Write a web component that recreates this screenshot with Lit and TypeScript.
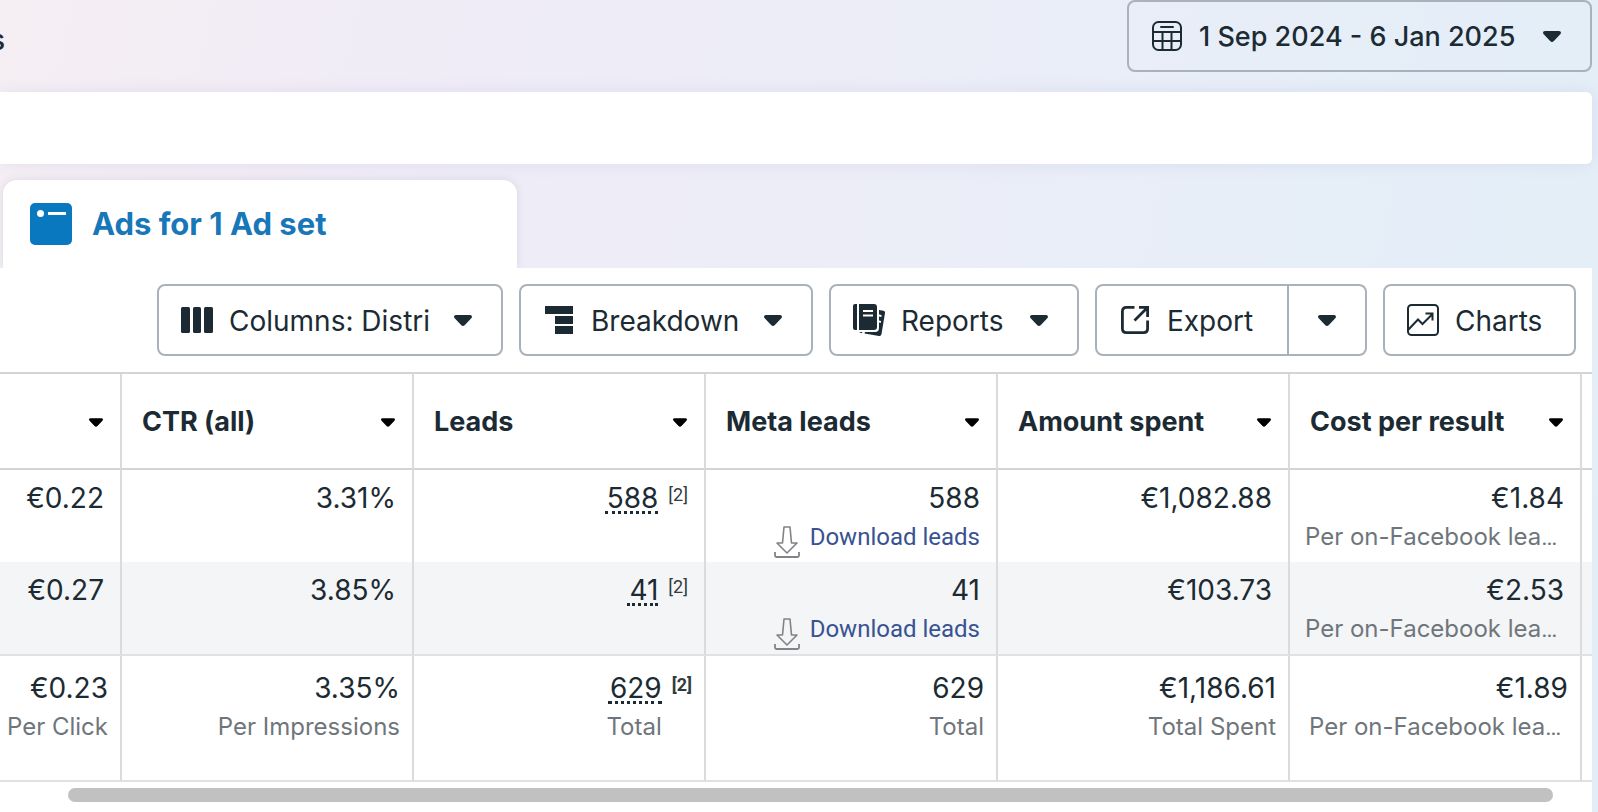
import { LitElement, html, css, svg, nothing } from "lit";
import { customElement } from "lit/decorators.js";
import { classMap } from "lit/directives/class-map.js";

interface Metric {
  value: string;
  note?: string;
  clipped?: boolean;
  ref?: string;
  download?: boolean;
}

const caret = (size = "big") => html`
  <svg class="caret ${size}" viewBox="0 0 18 11" aria-hidden="true">
    <path d="M2 0H16C17.9 0 18.6 2 17.3 3.3L10.9 10Q9 11.8 7.1 10L.7 3.3C-.6 2 .1 0 2 0Z" fill="currentColor" />
  </svg>`;

const icon = (body: unknown) => html`
  <svg class="icon" viewBox="0 0 32 32" fill="none" stroke="currentColor" stroke-width="2" aria-hidden="true">${body}</svg>`;

const calendarIcon = icon(svg`
  <rect x="2" y="2" width="28" height="28" rx="5.5" />
  <path d="M2 12H30M2 21H30M11.5 12V30M20.5 12V30" />
  <path d="M10 7H22" stroke-linecap="round" />`);

const columnsIcon = icon(svg`
  <g fill="currentColor" stroke="none">
    <rect x="0" y="3" width="9" height="26" rx="1.5" />
    <rect x="12" y="3" width="8" height="26" rx="1.5" />
    <rect x="23" y="3" width="9" height="26" rx="1.5" />
  </g>`);

const breakdownIcon = icon(svg`
  <path d="M2 2H30V10H2ZM12 12H30V20H12ZM12 22H30V30H12Z" fill="currentColor" stroke="none" />`);

const reportsIcon = icon(svg`
  <g fill="currentColor" stroke="none">
    <path d="M2 0H4V26H2Q0 26 0 24V2Q0 0 2 0Z" />
    <path d="M6 0H21Q24 0 24 3V23Q24 26 21 26H6Z" />
    <path d="M26 6L30.500 6.800Q32.200 7.200 32 9L28.500 30Q28 32.200 26 32L11.500 29.500L12 28H22Q26 28 26 24V18.500L28 18.700V17L26 16.500V12.500L28.500 13V11L26 10.500Z" />
    <path d="M6 28H9.500L8.500 29.300Z" />
  </g>
  <path d="M10 7H20M10 11.500H20" stroke="#fff" />`);

const exportIcon = icon(svg`
  <path d="M15.500 3.400H7.500Q3.400 3.400 3.400 7.500V24.500Q3.400 28.600 7.500 28.600H24.500Q28.600 28.600 28.600 24.500V16.600" stroke-width="2.800" />
  <path d="M20 3.400H28.600V13M28 4L15.500 16.500" stroke-width="2.800" />`);

const chartsIcon = icon(svg`
  <rect x="1" y="1" width="30" height="30" rx="3.500" />
  <path d="M1.500 25.500L11 15.500L15.500 20L25.500 10M18.500 9.500H25.500V16.500" />`);

const downloadIcon = html`
  <svg class="download" viewBox="0 0 26 32" fill="none" stroke="#808387" stroke-width="2" aria-hidden="true">
    <path d="M10 1H16L17.500 17H23L13 27L3 17H8.500Z" stroke-width="1.600" stroke-linejoin="round" />
    <path d="M1 26V29.500Q1 31 2.500 31H23.500Q25 31 25 29.500V26" stroke-width="1.800" />
  </svg>`;

const HEADERS = ["", "CTR (all)", "Leads", "Meta leads", "Amount spent", "Cost per result"];

const ROWS: Metric[][] = [
  [
    { value: "€0.22" },
    { value: "3.31%" },
    { value: "588", ref: "[2]" },
    { value: "588", download: true },
    { value: "€1,082.88" },
    { value: "€1.84", note: "Per on-Facebook lea", clipped: true },
  ],
  [
    { value: "€0.27" },
    { value: "3.85%" },
    { value: "41", ref: "[2]" },
    { value: "41", download: true },
    { value: "€103.73" },
    { value: "€2.53", note: "Per on-Facebook lea", clipped: true },
  ],
];

const TOTALS: Metric[] = [
  { value: "€0.23", note: "Per Click" },
  { value: "3.35%", note: "Per Impressions" },
  { value: "629", ref: "[2]", note: "Total" },
  { value: "629", note: "Total" },
  { value: "€1,186.61", note: "Total Spent" },
  { value: "€1.89", note: "Per on-Facebook lea", clipped: true },
];

@customElement("app-root")
export class AppRoot extends LitElement {
  static styles = css`
    :host {
      display: block;
      min-height: 100vh;
      box-sizing: border-box;
      padding-right: 6px;
      overflow: hidden;
      color: #1c2b33;
      font: 400 28px/40px Inter, "Noto Sans", sans-serif;
      background: linear-gradient(100deg, #f5eff4 0%, #f3edf4 9%, #efecf7 28%, #ebedf7 55%, #e6eef8 78%, #e2eef7 100%);
    }
    * { box-sizing: border-box; }
    button {
      font: inherit;
      color: inherit;
      background: none;
      border: 0;
      margin: 0;
      padding: 0;
      cursor: pointer;
    }
    svg { display: block; flex: none; }
    .icon { width: 32px; height: 32px; }
    .caret.big { width: 18px; height: 11px; }
    .caret.small { width: 14px; height: 9px; color: #000; }

    .topbar {
      display: flex;
      justify-content: space-between;
      align-items: center;
      height: 72px;
    }
    .crumb {
      display: flex;
      justify-content: flex-end;
      width: 5px;
      overflow: hidden;
      padding-top: 8px;
      font-weight: 500;
    }
    .button {
      display: flex;
      align-items: center;
      gap: 16px;
      height: 72px;
      padding: 0 29px 0 22px;
      border: 2px solid #a9b2ba;
      border-radius: 8px;
      white-space: nowrap;
    }
    .button .label { padding-top: 2px; }
    .button .caret { margin-left: auto; }
    .date { min-width: 465px; font-size: 27px; font-weight: 500; }
    .columns { min-width: 346px; }
    .breakdown { min-width: 294px; }
    .reports { min-width: 250px; }
    .export { min-width: 194px; }
    .charts { min-width: 193px; }
    .search {
      height: 72px;
      margin-top: 20px;
      background: #fff;
      border-radius: 0 6px 6px 0;
      box-shadow: 0 0 16px rgba(120, 110, 190, 0.12);
    }
    .tabs { display: flex; margin-top: 16px; padding-left: 3px; }
    .tab {
      display: flex;
      align-items: center;
      gap: 20px;
      width: 514px;
      height: 88px;
      padding: 0 27px;
      border-radius: 14px 14px 0 0;
      background: #fff;
      color: #1877b8;
      font-size: 31px;
      font-weight: 700;
      text-decoration: none;
      box-shadow: 0 0 8px rgba(60, 60, 100, 0.12);
    }
    .tab svg { width: 42px; height: 42px; }
    .panel {
      position: relative;
      background: #fff;
      min-height: calc(100vh - 268px);
    }
    .toolbar {
      display: flex;
      justify-content: flex-end;
      gap: 16px;
      padding: 16px;
    }
    .split { display: flex; }
    .split .export { border-radius: 8px 0 0 8px; }
    .split .more {
      width: 78px;
      justify-content: center;
      padding: 0;
      border-left: 0;
      border-radius: 0 8px 8px 0;
    }
    .more .caret { margin: 0; }

    table {
      width: 100%;
      table-layout: fixed;
      border-collapse: separate;
      border-spacing: 0;
      border-top: 2px solid #d3d4d6;
    }
    .first { width: 122px; }
    .rest { width: 10px; }
    th, td {
      padding: 8px 16px 6px 15px;
      border-right: 2px solid #dadbdd;
      text-align: right;
      vertical-align: top;
      white-space: nowrap;
    }
    th {
      height: 96px;
      padding: 0 17px 0 20px;
      border-bottom: 2px solid #d3d4d6;
      font-size: 27px;
      font-weight: 700;
      vertical-align: middle;
    }
    .head { display: flex; align-items: center; justify-content: space-between; padding-top: 2px; }
    .even td { background: #f4f5f7; border-bottom: 2px solid #dfe1e3; }
    .totals td {
      padding: 12px 12px 34px 19px;
      border-bottom: 2px solid #e0e1e3;
    }
    td.first-cell, .totals td.first-cell { padding-left: 0; }
    th:last-child, td:last-child, .totals td:last-child { border-right: 0; padding: 0; }
    .line { display: flex; justify-content: flex-end; gap: 10px; }
    .line.from-start { justify-content: flex-start; }
    .stack { display: flex; flex-direction: column; align-items: flex-end; }
    .value { display: block; height: 40px; }
    .tall { height: 40px; }
    .dotted {
      height: 36px;
      padding-left: 2px;
      border-bottom: 3px dotted #1c2b33;
    }
    .ref {
      font: 400 18px/34px Roboto, sans-serif;
      color: #333b40;
    }
    .totals .ref { font-weight: 700; }
    .note { display: block; font-size: 24px; line-height: 38px; color: #6f767b; }
    .dots { font-family: Roboto, sans-serif; }
    .link {
      display: flex;
      align-items: flex-start;
      gap: 10px;
      height: 38px;
      font: 400 24px/38px Roboto, sans-serif;
      color: #385292;
      text-decoration: none;
    }
    .download { width: 26px; height: 32px; margin-top: 8px; }
    .scroll { padding: 6px 39px 0 68px; }
    .thumb { height: 14px; border-radius: 7px; background: #c1c1c1; }
  `;

  private cell(m: Metric, index: number) {
    const value = m.ref
      ? html`<span class="tall"><span class="value dotted">${m.value}</span></span>`
      : html`<span class="value">${m.value}</span>`;
    return html`
      <td class=${classMap({ "first-cell": index === 0 })}>
        <div class="line">
          <div class="stack">
            ${value}
            ${m.note && !m.clipped ? html`<span class="note">${m.note}</span>` : nothing}
          </div>
          ${m.ref ? html`<span class="ref">${m.ref}</span>` : nothing}
        </div>
        ${m.clipped
          ? html`<div class="line from-start"><span class="note">${m.note}<span class="dots">…</span></span></div>`
          : nothing}
        ${m.download
          ? html`<div class="line"><a class="link" href="#">${downloadIcon}Download leads</a></div>`
          : nothing}
      </td>`;
  }

  render() {
    return html`
      <header class="topbar">
        <span class="crumb">s</span>
        <button class="button date">${calendarIcon}<span class="label">1 Sep 2024 - 6 Jan 2025</span>${caret()}</button>
      </header>
      <div class="search"></div>
      <nav class="tabs">
        <a class="tab" href="#">
          <svg viewBox="0 0 42 42" aria-hidden="true">
            <rect width="42" height="42" rx="5" fill="#0a78be" />
            <circle cx="10.500" cy="10.500" r="3.500" fill="#fff" />
            <path d="M18 10.500H36" stroke="#fff" stroke-width="3" />
          </svg>
          Ads for 1 Ad set
        </a>
      </nav>
      <main class="panel">
        <div class="toolbar">
          <button class="button columns">${columnsIcon}<span class="label">Columns: Distri</span>${caret()}</button>
          <button class="button breakdown">${breakdownIcon}<span class="label">Breakdown</span>${caret()}</button>
          <button class="button reports">${reportsIcon}<span class="label">Reports</span>${caret()}</button>
          <div class="split">
            <button class="button export">${exportIcon}<span class="label">Export</span></button>
            <button class="button more" aria-label="Export options">${caret()}</button>
          </div>
          <button class="button charts">${chartsIcon}<span class="label">Charts</span></button>
        </div>
        <table>
          <colgroup>
            <col class="first" />
            ${HEADERS.slice(1).map(() => html`<col />`)}
            <col class="rest" />
          </colgroup>
          <thead>
            <tr>
              ${HEADERS.map((h) => html`<th scope="col"><div class="head"><span>${h}</span>${caret("small")}</div></th>`)}
              <th></th>
            </tr>
          </thead>
          <tbody>
            ${ROWS.map((row, i) => html`
              <tr class=${classMap({ even: i % 2 === 1 })}>${row.map((m, c) => this.cell(m, c))}<td></td></tr>`)}
          </tbody>
          <tfoot>
            <tr class="totals">${TOTALS.map((m, c) => this.cell(m, c))}<td></td></tr>
          </tfoot>
        </table>
        <div class="scroll"><div class="thumb"></div></div>
      </main>`;
  }
}
